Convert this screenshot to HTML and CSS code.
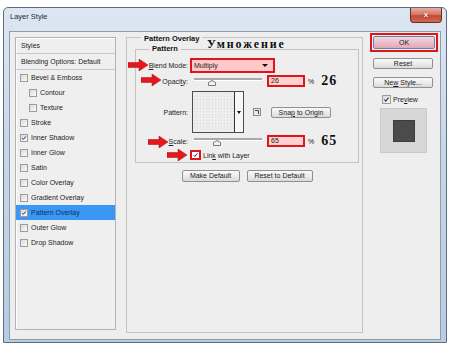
FILE: index.html
```html
<!DOCTYPE html>
<html lang="en">

<head>
  <meta charset="UTF-8" />
  <title>Layer Style</title>
  <link rel="stylesheet" href="styles.css">
</head>

<body>
  <div class="window">
    <div class="titlebar">
      <span class="title">Layer Style</span>
      <span class="close">x</span>
    </div>

    <div class="client">
      <!-- Styles list -->
      <div class="styles-panel">
        <div class="panel-head">Styles</div>
        <div class="panel-head">Blending Options: Default</div>
        <ul class="style-list">
          <li><span class="check"></span>Bevel &amp; Emboss</li>
          <li class="sub"><span class="check"></span>Contour</li>
          <li class="sub"><span class="check"></span>Texture</li>
          <li><span class="check"></span>Stroke</li>
          <li><span class="check"><svg viewBox="0 0 8 8"><path d="M1.6 4.2 L3.1 5.9 L6.4 1.8" /></svg></span>Inner Shadow</li>
          <li><span class="check"></span>Inner Glow</li>
          <li><span class="check"></span>Satin</li>
          <li><span class="check"></span>Color Overlay</li>
          <li><span class="check"></span>Gradient Overlay</li>
          <li class="selected"><span class="check"><svg viewBox="0 0 8 8"><path d="M1.6 4.2 L3.1 5.9 L6.4 1.8" /></svg></span>Pattern Overlay</li>
          <li><span class="check"></span>Outer Glow</li>
          <li><span class="check"></span>Drop Shadow</li>
        </ul>
      </div>

      <!-- Pattern Overlay settings -->
      <fieldset class="group overlay-group">
        <legend>Pattern Overlay<span class="note note-title">Умножение</span></legend>

        <fieldset class="group pattern-group">
          <legend>Pattern</legend>

          <div class="row row-blend">
            <svg class="arrow arrow-blend" viewBox="0 0 20 12"><polygon points="0,3.5 11,3.5 11,0 20,6 11,12 11,8.5 0,8.5" /></svg>
            <span class="row-label"><u>B</u>lend Mode:</span>
            <div class="select-box">
              <span>Multiply</span>
              <span class="drop"></span>
            </div>
          </div>

          <div class="row row-value">
            <svg class="arrow arrow-opacity" viewBox="0 0 20 12"><polygon points="0,3.5 11,3.5 11,0 20,6 11,12 11,8.5 0,8.5" /></svg>
            <span class="row-label">Opaci<u>t</u>y:</span>
            <div class="slider">
              <div class="track"></div>
              <svg class="thumb" style="left: 26%;" viewBox="0 0 8 6"><polygon points="0.5,5.5 0.5,2.5 4,0.5 7.5,2.5 7.5,5.5" /></svg>
            </div>
            <span class="value-box">26</span>
            <span class="unit">%</span>
            <span class="note note-num">26</span>
          </div>

          <div class="row row-pattern">
            <span class="row-label">Pattern:</span>
            <div class="swatch">
              <div class="swatch-fill"></div>
              <div class="swatch-menu"><span class="drop"></span></div>
            </div>
            <span class="icon-btn">
              <svg viewBox="0 0 8 8"><rect x="0.5" y="0.5" width="7" height="7" /><path d="M2 2.5 H5.5 V6" /></svg>
            </span>
            <span class="btn btn-snap">Sna<u>p</u> to Origin</span>
          </div>

          <div class="row row-value row-scale">
            <svg class="arrow arrow-scale" viewBox="0 0 20 12"><polygon points="0,3.5 11,3.5 11,0 20,6 11,12 11,8.5 0,8.5" /></svg>
            <span class="row-label"><u>S</u>cale:</span>
            <div class="slider">
              <div class="track"></div>
              <svg class="thumb" style="left: 34%;" viewBox="0 0 8 6"><polygon points="0.5,5.5 0.5,2.5 4,0.5 7.5,2.5 7.5,5.5" /></svg>
            </div>
            <span class="value-box">65</span>
            <span class="unit">%</span>
            <span class="note note-num">65</span>
          </div>

          <div class="row row-link">
            <svg class="arrow arrow-link" viewBox="0 0 20 12"><polygon points="0,3.5 11,3.5 11,0 20,6 11,12 11,8.5 0,8.5" /></svg>
            <span class="link-check"><svg viewBox="0 0 8 8"><path d="M1.6 4.2 L3.1 5.9 L6.4 1.8" /></svg></span>
            <span class="link-text">Lin<u>k</u> with Layer</span>
          </div>
        </fieldset>

        <div class="button-row">
          <span class="btn btn-make">Make Default</span>
          <span class="btn btn-reset-def">Reset to Default</span>
        </div>
      </fieldset>

      <!-- Dialog buttons and preview -->
      <div class="side">
        <div class="ok-wrap"><span class="btn btn-ok">OK</span></div>
        <span class="btn btn-side btn-reset">Reset</span>
        <span class="btn btn-side btn-new">Ne<u>w</u> Style...</span>
        <div class="preview-row">
          <span class="check check-preview"><svg viewBox="0 0 8 8"><path d="M1.6 4.2 L3.1 5.9 L6.4 1.8" /></svg></span>
          <span>Pre<u>v</u>iew</span>
        </div>
        <div class="preview-box">
          <div class="preview-square"></div>
        </div>
      </div>
    </div>
  </div>
</body>

</html>
```

FILE: styles.css
```css
/* Page */
body {
  margin: 0;
  width: 450px;
  height: 345px;
  overflow: hidden;
  background-color: #ffffff;
  font-family: 'Liberation Sans', Arial, sans-serif;
  font-size: 7px;
  color: #1c1c1c;
}

u {
  text-decoration: underline;
}

/* Window frame */
.window {
  margin: 7px 0 0 3px;
  width: 444px;
  height: 336px;
  box-sizing: border-box;
  border: 1px solid #5d6e82;
  border-radius: 5px 5px 0 0;
  background: linear-gradient(to bottom, #dde7f2 0%, #c8d7e7 40%, #b9cbdf 100%);
  display: flex;
  flex-direction: column;
}

.titlebar {
  height: 23px;
  display: flex;
  align-items: flex-start;
  padding: 0 4px 0 6px;
  flex-shrink: 0;
}

.title {
  padding-top: 4px;
  line-height: 10px;
  font-size: 7.5px;
  color: #1e2a36;
}

.close {
  margin-left: auto;
  width: 32px;
  height: 15px;
  box-sizing: border-box;
  border: 1px solid #6f2c22;
  border-top: none;
  border-radius: 0 0 4px 4px;
  background: linear-gradient(to bottom, #e9ada0 0%, #d77a68 45%, #c44a35 55%, #cf6a55 100%);
  color: #ffffff;
  font-weight: bold;
  font-size: 8px;
  line-height: 13px;
  text-align: center;
  text-shadow: 0 0 2px #5a1a10;
}

/* Client area */
.client {
  flex: 1;
  margin: 0 5px 2px 5px;
  border: 1px solid #8b9db1;
  background-color: #eeeeee;
  display: flex;
  align-items: flex-start;
}

/* Left styles list */
.styles-panel {
  margin: 5px 0 0 5px;
  width: 101px;
  height: 293px;
  box-sizing: border-box;
  border: 1px solid #b3b3b3;
  box-shadow: inset 1px 1px 0 #ffffff;
  background-color: #efefef;
  flex-shrink: 0;
}

.panel-head {
  height: 15px;
  line-height: 15px;
  padding-left: 5px;
  border-bottom: 1px solid #c9c9c9;
}

.style-list {
  list-style-type: none;
  margin: 0;
  padding: 0;
}

.style-list li {
  height: 15px;
  display: flex;
  align-items: center;
  padding-left: 4px;
}

.style-list li.sub {
  padding-left: 13px;
}

.style-list li.selected {
  background-color: #3a98f4;
  color: #0f2c5e;
}

.check {
  width: 8px;
  height: 8px;
  box-sizing: border-box;
  border: 1px solid #9c9c9c;
  background: linear-gradient(135deg, #d9d9d9, #fbfbfb);
  margin-right: 3px;
  flex-shrink: 0;
  display: flex;
}

.check svg,
.link-check svg {
  width: 100%;
  height: 100%;
}

.check path,
.link-check path {
  fill: none;
  stroke: #1f3766;
  stroke-width: 1.3;
}

/* Group boxes */
.group {
  margin: 0;
  border: 1px solid #c3c3c3;
  min-width: 0;
}

.group legend {
  font-weight: bold;
  font-size: 7.5px;
  line-height: 8px;
  color: #111;
}

.overlay-group {
  position: relative;
  margin-left: 10px;
  width: 237px;
  height: 301px;
  box-sizing: border-box;
  padding: 2px 3px 0 8px;
  flex-shrink: 0;
}

.overlay-group > legend {
  position: relative;
  padding: 3px 3px 0 3px;
  margin-left: 6px;
}

.pattern-group {
  width: 224px;
  box-sizing: border-box;
  padding: 5px 0 2px 0;
}

.pattern-group > legend {
  padding: 0 3px;
  margin-left: 13px;
}

/* Annotations */
.note {
  font-family: 'Liberation Serif', 'Times New Roman', serif;
  font-weight: bold;
  color: #111;
}

.note-title {
  position: absolute;
  left: 66px;
  top: 6px;
  font-size: 12px;
  line-height: 12px;
  letter-spacing: 1.9px;
  white-space: nowrap;
}

.note-num {
  margin-left: 7px;
  font-size: 14px;
  line-height: 12px;
  letter-spacing: 1px;
}

.arrow {
  position: absolute;
  width: 20px;
  height: 12px;
}

.arrow polygon {
  fill: #e3171d;
  stroke: #a80d10;
  stroke-width: 0.5;
}

.arrow-blend {
  left: -8px;
  top: 1px;
}

.arrow-opacity {
  left: 5px;
  top: -1px;
}

.arrow-scale {
  left: 12px;
  top: 1px;
}

.arrow-link {
  left: 31px;
  top: -1px;
}

/* Rows */
.row {
  position: relative;
  display: flex;
  align-items: center;
}

.row-label {
  width: 54px;
  box-sizing: border-box;
  padding-right: 2px;
  text-align: right;
  flex-shrink: 0;
}

.row-blend {
  height: 15px;
}

.row-value {
  margin-top: 2px;
  height: 12px;
}

.row-pattern {
  margin-top: 4px;
  height: 42px;
}

.row-link {
  margin-top: 3px;
  height: 10px;
}

.select-box {
  width: 85px;
  height: 15px;
  box-sizing: border-box;
  border: 2px solid #e0141b;
  background-color: #ffc9c9;
  display: flex;
  align-items: center;
  justify-content: space-between;
  padding: 0 5px 0 2px;
}

.drop {
  width: 0;
  height: 0;
  border-left: 3px solid transparent;
  border-right: 3px solid transparent;
  border-top: 3px solid #111;
}

.slider {
  position: relative;
  margin-left: 4px;
  width: 68px;
  height: 12px;
}

.track {
  position: absolute;
  left: 0;
  right: 0;
  top: 3px;
  height: 2px;
  background-color: #a9a9a9;
  border-bottom: 1px solid #ffffff;
}

.thumb {
  position: absolute;
  top: 5px;
  width: 8px;
  height: 6px;
  margin-left: -4px;
}

.thumb polygon {
  fill: #f2f2f2;
  stroke: #7a7a7a;
  stroke-width: 1;
}

.value-box {
  margin-left: 5px;
  width: 38px;
  height: 12px;
  box-sizing: border-box;
  border: 2px solid #e0141b;
  background-color: #ffd0d0;
  padding-left: 2px;
  line-height: 8px;
}

.unit {
  margin-left: 3px;
}

/* Pattern swatch */
.swatch {
  margin-left: 2px;
  width: 52px;
  height: 42px;
  box-sizing: border-box;
  border: 1px solid #4c4c4c;
  display: flex;
  background-color: #f7f7f7;
}

.swatch-fill {
  flex: 1;
  border-right: 1px solid #333;
  background-color: #efefef;
  background-image: radial-gradient(#dadada 0.7px, transparent 0.9px),
    radial-gradient(#e2e2e2 0.6px, transparent 0.8px);
  background-size: 3px 3px, 4px 4px;
  background-position: 0 0, 1px 2px;
}

.swatch-menu {
  width: 8px;
  display: flex;
  align-items: center;
  justify-content: center;
}

.swatch-menu .drop {
  border-left-width: 2px;
  border-right-width: 2px;
  border-top-width: 3px;
}

.icon-btn {
  margin-left: 9px;
  width: 8px;
  height: 8px;
  display: flex;
}

.icon-btn svg {
  width: 100%;
  height: 100%;
}

.icon-btn rect {
  fill: #e9e9e9;
  stroke: #8a8a8a;
}

.icon-btn path {
  fill: none;
  stroke: #444;
  stroke-width: 1;
}

/* Buttons */
.btn {
  display: block;
  box-sizing: border-box;
  height: 11px;
  line-height: 9px;
  text-align: center;
  border: 1px solid #8f9090;
  border-radius: 2px;
  background: linear-gradient(to bottom, #f9f9f9 0%, #ececec 50%, #dadada 100%);
  color: #1c1c1c;
  white-space: nowrap;
}

.btn-snap {
  margin-left: 10px;
  width: 60px;
}

.link-check {
  margin-left: 54px;
  width: 11px;
  height: 10px;
  box-sizing: border-box;
  border: 2px solid #e0141b;
  background-color: #ffffff;
  display: flex;
}

.link-text {
  margin-left: 2px;
}

.button-row {
  margin-top: 7px;
  display: flex;
  justify-content: center;
  gap: 7px;
}

.button-row .btn {
  height: 12px;
  line-height: 10px;
}

.btn-make {
  width: 58px;
}

.btn-reset-def {
  width: 66px;
}

/* Right column */
.side {
  margin-left: 7px;
  width: 68px;
  display: flex;
  flex-direction: column;
  flex-shrink: 0;
}

.ok-wrap {
  margin-top: 1px;
  border: 2px solid #e0141b;
  padding: 1px;
}

.btn-ok {
  height: 13px;
  line-height: 11px;
  border-color: #6a86a8;
  background: linear-gradient(to bottom, #f4d6de 0%, #e9c0cb 50%, #dcaab8 100%);
}

.btn-side {
  margin-left: 3px;
  width: 60px;
}

.btn-reset {
  margin-top: 6px;
}

.btn-new {
  margin-top: 8px;
}

.preview-row {
  margin-top: 7px;
  padding-left: 12px;
  height: 9px;
  display: flex;
  align-items: center;
}

.check-preview {
  width: 9px;
  height: 9px;
  margin-right: 2px;
}

.preview-box {
  margin: 4px 0 0 10px;
  width: 47px;
  height: 45px;
  box-sizing: border-box;
  border: 1px solid #cacaca;
  background-color: #d7d7d7;
  display: flex;
  align-items: center;
  justify-content: center;
}

.preview-square {
  width: 22px;
  height: 22px;
  background-color: #4b4b4b;
  border: 1px solid #3c3c3c;
  box-sizing: border-box;
}
```
